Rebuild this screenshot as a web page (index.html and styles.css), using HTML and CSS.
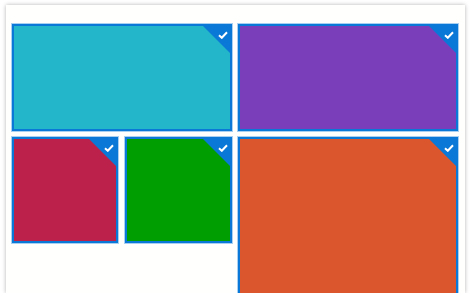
FILE: index.html
```html
<!doctype html>
<html lang="en">
<head>
    <meta charset="UTF-8">
    <meta name="viewport" content="width=device-width, initial-scale=1.0">
    <title>Tiles</title>
    <link rel="stylesheet" href="styles.css">
</head>
<body>
<div class="panel">
    <div class="board">
        <div class="column">
            <div class="tile wide teal">
                <span class="corner"><svg viewBox="0 0 10 8"><path d="M1 4.2 L3.8 6.8 L9 1.2"/></svg></span>
            </div>
            <div class="row">
                <div class="tile small crimson">
                    <span class="corner"><svg viewBox="0 0 10 8"><path d="M1 4.2 L3.8 6.8 L9 1.2"/></svg></span>
                </div>
                <div class="tile small green">
                    <span class="corner"><svg viewBox="0 0 10 8"><path d="M1 4.2 L3.8 6.8 L9 1.2"/></svg></span>
                </div>
            </div>
        </div>
        <div class="column">
            <div class="tile wide purple">
                <span class="corner"><svg viewBox="0 0 10 8"><path d="M1 4.2 L3.8 6.8 L9 1.2"/></svg></span>
            </div>
            <div class="tile large orange">
                <span class="corner"><svg viewBox="0 0 10 8"><path d="M1 4.2 L3.8 6.8 L9 1.2"/></svg></span>
            </div>
        </div>
    </div>
</div>
</body>
</html>
```

FILE: styles.css
```css
body {
    margin: 0;
    background-color: #ffffff;
    font-family: "Liberation Sans", Arial, sans-serif;
}
.panel {
    margin: 5px 0 0 6px;
    width: 459px;
    height: 288px;
    box-sizing: border-box;
    padding: 19px 7px 0 6px;
    background-color: #fffffd;
    box-shadow: 0 0 4px rgba(0, 0, 0, 0.3);
    overflow: hidden;
}
.board {
    display: flex;
    gap: 6px;
}
.column {
    display: flex;
    flex-direction: column;
    gap: 6px;
    width: 220px;
}
.row {
    display: flex;
    gap: 7px;
}
.tile {
    position: relative;
    box-sizing: border-box;
    border: 2px solid #0a78d6;
    box-shadow: 0 0 0 1px rgba(10, 120, 214, 0.35);
}
.tile.wide {
    height: 107px;
}
.tile.small {
    width: 106px;
    height: 106px;
}
.tile.small + .tile.small {
    width: 107px;
}
.tile.large {
    height: 220px;
}
.teal { background-color: #23b5c9; }
.purple { background-color: #7b3eba; }
.crimson { background-color: #bc214b; }
.green { background-color: #009e00; }
.orange { background-color: #db562c; }
.corner {
    position: absolute;
    top: -1px;
    right: -1px;
    width: 29px;
    height: 29px;
    background-color: #0a78d6;
    clip-path: polygon(0 0, 100% 0, 100% 100%);
}
.corner svg {
    position: absolute;
    top: 6px;
    right: 3px;
    width: 10px;
    height: 8px;
}
.corner path {
    fill: none;
    stroke: #ffffff;
    stroke-width: 2;
}
```
